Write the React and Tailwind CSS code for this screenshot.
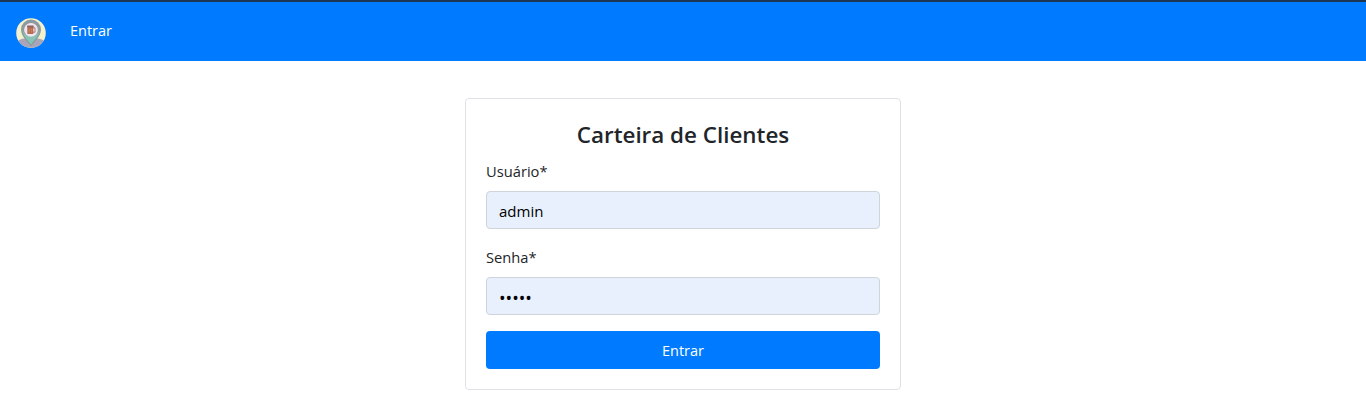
function Logo() {
  return (
    <svg className="size-[30px]" viewBox="0 0 30 30" aria-hidden="true">
      <defs>
        <clipPath id="disc">
          <circle cx="15" cy="15" r="14.8" />
        </clipPath>
      </defs>
      <g clipPath="url(#disc)">
        <rect width="30" height="30" fill="#f5f1cd" />
        <path d="M0 25 Q3 20.5 9 20.5 H21 Q27 20.5 30 25 V30 H0Z" fill="#a9a5b8" />
        <path d="M15 28.5 C12 24 5 18.5 5 11.5 a10 10 0 0 1 20 0 C25 18.5 18 24 15 28.5Z" fill="#8b9ba0" />
        <path d="M15 26.8 C12.5 22.5 7 18.5 6.4 12 Q9 18.5 15 18.5 Q21 18.5 23.6 12 C23 18.5 17.5 22.5 15 26.8Z" fill="#86c4b6" />
        <circle cx="15" cy="11.8" r="6.9" fill="#f1e6ef" />
        <path d="M17 9.8 h2 v4.4 h-2" fill="none" stroke="#b17868" strokeWidth="1" />
        <rect x="11.3" y="8" width="6" height="8" rx=".6" fill="#b46c52" />
        <path d="M11.2 7.6 h6.4 v1.7 h-6.4z" fill="#8b6265" />
        <path d="M13.2 10.6 v4 M15.4 10.6 v4" stroke="#d08a5e" strokeWidth=".8" />
      </g>
    </svg>
  );
}

const fieldClass =
  "block h-[38px] w-full rounded-[4px] border border-[#ced4da] bg-[#e8f0fe] px-3 leading-6 text-black outline-none";
const labelClass = "mb-2 block h-6 text-[14.7px] leading-6";

export default function App() {
  return (
    <div className="min-h-[418px] bg-white font-['Open_Sans','Noto_Sans',sans-serif] text-[#212529]">
      <nav className="flex h-[61px] items-center border-t-2 border-[#1c3550] bg-[#007bff] px-4 pt-[3px]">
        <Logo />
        <a href="#entrar" className="ml-6 pb-[5px] text-[14.5px] leading-6 text-white">
          Entrar
        </a>
      </nav>
      <main className="flex justify-center pt-[37px]">
        <form className="h-[292px] w-[436px] rounded-[4px] border border-[#dee2e6] px-5 pt-5">
          <h1 className="mb-2 h-8 text-center text-[22.4px] leading-8 font-semibold">
            Carteira de Clientes
          </h1>
          <div className="mb-4">
            <label htmlFor="usuario" className={labelClass}>Usuário*</label>
            <input id="usuario" type="text" defaultValue="admin" className={`${fieldClass} pt-[1px] text-[15px]`} />
          </div>
          <div className="mb-4">
            <label htmlFor="senha" className={labelClass}>Senha*</label>
            <input id="senha" type="password" defaultValue="admin" className={`${fieldClass} pt-[3px] text-[17.5px]`} />
          </div>
          <button type="button" className="block h-[38px] w-full rounded-[4px] bg-[#007bff] pt-[2px] text-[14.5px] leading-6 text-white">
            Entrar
          </button>
        </form>
      </main>
    </div>
  );
}
